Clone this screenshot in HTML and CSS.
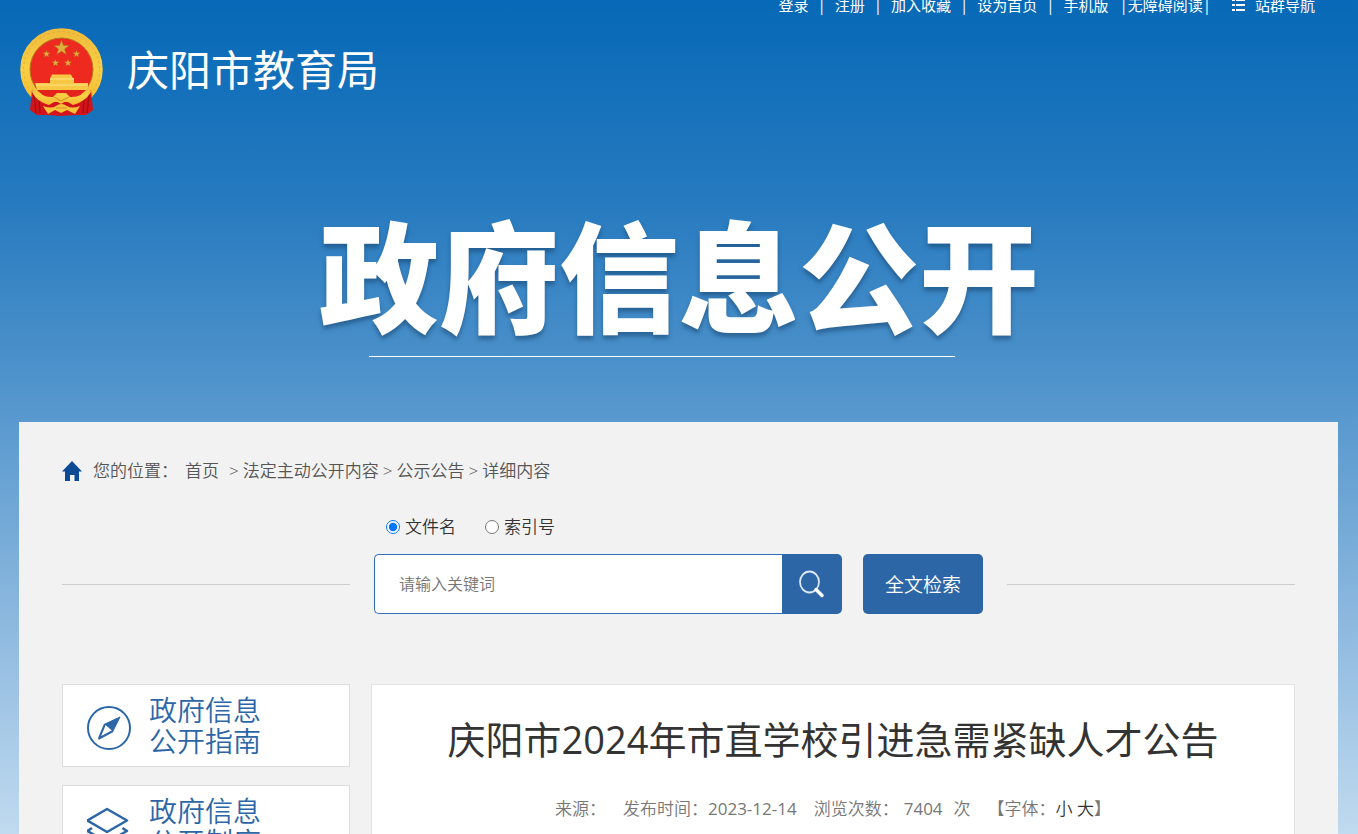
FILE: index.html
```html
<!DOCTYPE html>
<html lang="zh-CN">
<head>
<meta charset="UTF-8" />
<meta name="viewport" content="width=device-width, initial-scale=1" />
<title>庆阳市2024年市直学校引进急需紧缺人才公告</title>
<link rel="stylesheet" href="styles.css">
</head>
<body>

<header class="header">
  <nav class="topbar">
    <a href="#">登录</a><span>|</span>
    <a href="#">注册</a><span>|</span>
    <a href="#">加入收藏</a><span>|</span>
    <a href="#">设为首页</a><span>|</span>
    <a href="#">手机版</a>
    <a href="#" class="reading">|无障碍阅读|</a>
    <a href="#" class="sites">
      <svg width="13" height="12" viewBox="0 0 13 12" fill="#fff"><path d="M0 0h3v2H0zM4 0h9v2H4zM0 5h3v2H0zM4 5h9v2H4zM0 10h3v2H0zM4 10h9v2H4z"/></svg>
      站群导航
    </a>
  </nav>

  <a href="#" class="logo">
    <svg width="83" height="88" viewBox="0 0 83 88">
      <defs>
        <linearGradient id="gold" x1="0" y1="0" x2="0" y2="1">
          <stop offset="0" stop-color="#f0bd3c"/>
          <stop offset="0.5" stop-color="#f8cf45"/>
          <stop offset="1" stop-color="#f3b92f"/>
        </linearGradient>
        <path id="star" d="M0-8 1.9-2.6 7.6-2.5 3.1 1 4.7 6.5 0 3.2-4.7 6.5-3.1 1-7.6-2.5-1.9-2.6z"/>
      </defs>
      <circle cx="41.500" cy="41.500" r="36" fill="none" stroke="url(#gold)" stroke-width="10.500"/>
      <circle cx="41.500" cy="41.500" r="38" fill="none" stroke="#e0a530" stroke-width="0.8" stroke-dasharray="2 3"/>
      <path d="M12 62 10 82l7 5h10l14 1 15-1h10l7-5-2-20-12 12H24z" fill="#d4141a"/>
      <path d="M14 67l2 18M19 71l1 14M69 67l-2 18M64 71l-1 14" stroke="#a80d13" stroke-width="1.5" fill="none"/>
      <circle cx="41.500" cy="41.500" r="31.500" fill="#ee2a20" stroke="#b57a1a"/>
      <g fill="#e0ae3c" stroke="#b0661c" stroke-width="0.5">
        <use href="#star" x="41.500" y="20"/>
        <use href="#star" transform="translate(26.500 26) scale(.48)"/>
        <use href="#star" transform="translate(56.500 26) scale(.48)"/>
        <use href="#star" transform="translate(35.500 35) scale(.48)"/>
        <use href="#star" transform="translate(48 35) scale(.48)"/>
      </g>
      <path d="M32 46.500h19l2 4H30zM30 50h24v5H30zM15 55h53v7H17z" fill="#f8c744"/>
      <path d="M30 51h24M16 57h51" stroke="#ffe58a" fill="none"/>
      <path d="M17 62h49l-9 8H26z" fill="#e5231d"/>
      <path d="M14 59q8 11 19 10l4-4h9l4 4q11 1 19-10l2 5q-6 10-18 13l-7-4-5 3-5-3-7 4Q17 74 12 64z" fill="url(#gold)"/>
      <path d="M23 78q8 3 13 0 5-4 11 0 5 3 13 0l-5 8-8-4-6 3-6-3-7 4z" fill="#f6c43c"/>
      <path d="M34 69l7 4 8-4M36 80h11" stroke="#d68f20" fill="none"/>
    </svg>
    <span>庆阳市教育局</span>
  </a>

  <div class="banner">
    <div class="banner-inner">
      <h1>政府信息公开</h1>
      <div class="banner-line"></div>
    </div>
  </div>
</header>

<main class="panel">
  <nav class="crumbs">
    <svg width="20" height="20" viewBox="0 0 20 20" fill="#0c4a94"><path d="M10 0 20 10.500H17V20H12.500V14H8V20H3V10.500H0z"/></svg>
    <span class="crumbs-label">您的位置：</span>
    <a href="#" class="crumbs-home">首页</a>
    <span>&gt;</span>
    <a href="#">法定主动公开内容</a>
    <span>&gt;</span>
    <a href="#">公示公告</a>
    <span>&gt;</span>
    <a href="#">详细内容</a>
  </nav>

  <form class="search">
    <div class="search-type">
      <label><input type="radio" name="type" checked>文件名</label>
      <label><input type="radio" name="type">索引号</label>
    </div>
    <div class="search-row">
      <div class="search-box">
        <input type="text" placeholder="请输入关键词" aria-label="请输入关键词">
        <button type="submit" class="search-btn" aria-label="搜索">
          <svg width="28" height="28" viewBox="0 0 28 28" fill="none" stroke="#fff" stroke-linecap="round"><ellipse cx="11.500" cy="12" rx="9.500" ry="10.500" stroke-width="1.800" stroke="#dce7f4"/><path d="M18 19.500 24 25.500" stroke-width="3.500"/></svg>
        </button>
      </div>
      <button type="button" class="full-btn">全文检索</button>
    </div>
  </form>

  <div class="columns">
    <aside class="side">
      <a href="#" class="side-card">
        <svg width="44" height="48" viewBox="0 0 44 48" fill="none" stroke="#2c66a6"><circle cx="22" cy="26" r="21" stroke-width="2"/><path d="M33 15 26 29 18 22z" fill="#2c66a6"/><path d="M18 22 12 36.500 26 29" stroke-width="2" stroke-linejoin="round"/></svg>
        <span>政府信息<br>公开指南</span>
      </a>
      <a href="#" class="side-card">
        <svg width="44" height="48" viewBox="0 0 44 48" fill="none" stroke="#2c66a6" stroke-width="2.500" stroke-linejoin="round"><path d="M20 6 40 17.500 20 29 0.500 17.500z"/><path d="M5 25 0.500 28 20 39 40 28 35.500 25M5 34 0.500 36 20 46 40 36 35.500 34"/></svg>
        <span>政府信息<br>公开制度</span>
      </a>
    </aside>

    <article class="article">
      <h2>庆阳市2024年市直学校引进急需紧缺人才公告</h2>
      <div class="meta">
        <span>来源：</span>
        <span>发布时间：<time>2023-12-14</time></span>
        <span>浏览次数：<b>7404</b>次</span>
        <span class="font-size">【字体：<a href="#">小</a> <a href="#">大</a>】</span>
      </div>
    </article>
  </div>
</main>

</body>
</html>
```
FILE: styles.css
```css
* {
  box-sizing: border-box;
}

body {
  margin: 0;
  font-family: "Open Sans", "Noto Sans CJK SC", sans-serif;
  font-weight: 350;
  font-size: 17px;
  color: #333;
  background: #c0daee linear-gradient(#0769b7 0, #0b6bb8 30px, #267abf 200px, #5496cd 400px, #8ab7de 610px, #c0daef 834px) no-repeat;
}

a {
  color: inherit;
  text-decoration: none;
}

svg {
  display: block;
  flex: none;
}

/* Header */
.header {
  padding: 0 20px;
  color: #fff;
}

.topbar {
  display: flex;
  justify-content: flex-end;
  align-items: center;
  gap: 9px;
  height: 9px;
  padding-right: 23px;
  font-size: 15px;
  line-height: 12px;
  font-weight: 400;
  white-space: nowrap;
}

.reading {
  margin-left: 2px;
}

.sites {
  display: flex;
  align-items: center;
  gap: 10px;
  margin-left: 12px;
}

.logo {
  display: flex;
  align-items: center;
  gap: 24px;
  margin-top: 19px;
  font-size: 42px;
  line-height: 60px;
  font-weight: 400;
}

.logo span {
  padding-bottom: 4px;
}

.banner {
  display: flex;
  justify-content: center;
  padding: 102px 0 65px;
}

.banner h1 {
  margin: 0;
  font-size: 120px;
  line-height: 120px;
  font-weight: 900;
  text-shadow: 0 4px 4px rgba(20, 60, 100, 0.5);
}

.banner-line {
  width: 586px;
  height: 1px;
  margin: 18px 0 0 50px;
  background: #fff;
}

/* Content panel */
.panel {
  margin: 0 20px 0 19px;
  padding: 36px 43px 40px;
  background: #f2f2f2;
}

.crumbs {
  display: flex;
  align-items: center;
  gap: 4px;
  line-height: 26px;
  color: #555;
}

.crumbs-label {
  margin-left: 7px;
}

.crumbs-home {
  margin: 0 6px 0 3px;
}

/* Search */
.search {
  margin-top: 30px;
}

.search-type {
  display: flex;
  gap: 29px;
  padding-left: 324px;
  line-height: 26px;
}

.search-type label {
  display: flex;
  align-items: center;
  gap: 5px;
}

.search-type input {
  width: 14px;
  height: 14px;
  margin: 0;
}

.search-row {
  display: flex;
  align-items: center;
  margin-top: 14px;
}

.search-row::before,
.search-row::after {
  content: "";
  flex: 1;
  height: 1px;
  background: #ccc;
}

.search-box {
  display: flex;
  width: 468px;
  height: 60px;
  margin: 0 21px 0 24px;
}

.search-box input {
  flex: 1;
  min-width: 0;
  padding: 0 24px;
  border: 1px solid #2c6dbb;
  border-right: none;
  border-radius: 5px 0 0 5px;
  background: #fff;
  font: inherit;
  font-size: 16px;
}

.search-box input::placeholder {
  color: #757575;
}

.search-btn {
  width: 60px;
  padding: 0 16px;
  border: none;
  border-radius: 0 5px 5px 0;
  background: #2c66a6;
  cursor: pointer;
}

.full-btn {
  width: 120px;
  height: 60px;
  margin-right: 24px;
  padding: 0;
  border: none;
  border-radius: 5px;
  background: #2c66a6;
  color: #fff;
  font: inherit;
  font-size: 19px;
  cursor: pointer;
}

/* Columns */
.columns {
  display: flex;
  gap: 21px;
  margin-top: 70px;
}

.side {
  display: flex;
  flex-direction: column;
  gap: 18px;
  width: 288px;
}

.side-card {
  display: flex;
  align-items: center;
  gap: 18px;
  height: 83px;
  padding: 0 24px;
  border: 1px solid #ddd;
  background: #fff;
  color: #2c66a6;
  font-size: 28px;
  line-height: 31px;
}

.article {
  flex: 1;
  min-height: 400px;
  padding: 28px 20px;
  border: 1px solid #e4e4e4;
  background: #fff;
  text-align: center;
}

.article h2 {
  margin: 0;
  font-size: 38px;
  line-height: 52px;
  font-weight: 400;
}

.meta {
  display: flex;
  justify-content: center;
  gap: 17px;
  margin-top: 32px;
  line-height: 24px;
  color: #777;
}

.meta time,
.meta b {
  font-weight: 400;
}

.meta b {
  margin: 0 11px 0 5px;
}

.font-size a {
  color: #333;
}
```
